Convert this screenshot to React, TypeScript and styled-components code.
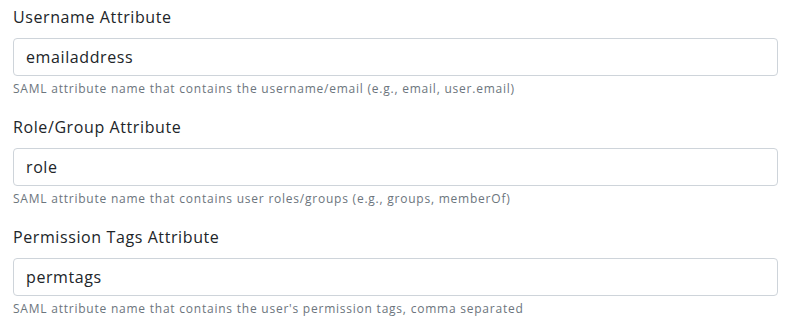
import styled, { createGlobalStyle } from "styled-components";

const GlobalStyle = createGlobalStyle`
  body {
    margin: 0;
    background: #ffffff;
    font-family: "Open Sans", "Liberation Sans", sans-serif;
  }
`;

const Form = styled.div`
  display: flex;
  flex-direction: column;
  gap: 17px;
  padding: 5px 13px 0 13px;
`;

const Field = styled.div`
  display: flex;
  flex-direction: column;
`;

const Label = styled.label`
  font-size: 16px;
  line-height: 24px;
  letter-spacing: 0.6px;
  color: #212529;
  margin-bottom: 9px;
`;

const Input = styled.input`
  box-sizing: border-box;
  height: 38px;
  width: 100%;
  padding: 0 12px;
  font-family: inherit;
  font-size: 16px;
  letter-spacing: 0.6px;
  color: #212529;
  background: #fff;
  border: 1px solid #ced4da;
  border-radius: 4px;
  outline: none;
`;

const Hint = styled.small`
  margin-top: 4px;
  font-size: 12px;
  line-height: 18px;
  letter-spacing: 0.77px;
  color: #6c757d;
`;

const fields = [
  {
    label: "Username Attribute",
    value: "emailaddress",
    hint: "SAML attribute name that contains the username/email (e.g., email, user.email)",
  },
  {
    label: "Role/Group Attribute",
    value: "role",
    hint: "SAML attribute name that contains user roles/groups (e.g., groups, memberOf)",
  },
  {
    label: "Permission Tags Attribute",
    value: "permtags",
    hint: "SAML attribute name that contains the user's permission tags, comma separated",
  },
];

export default function App() {
  return (
    <>
      <GlobalStyle />
      <Form>
        {fields.map((f) => (
          <Field key={f.label}>
            <Label>{f.label}</Label>
            <Input defaultValue={f.value} readOnly />
            <Hint>{f.hint}</Hint>
          </Field>
        ))}
      </Form>
    </>
  );
}
